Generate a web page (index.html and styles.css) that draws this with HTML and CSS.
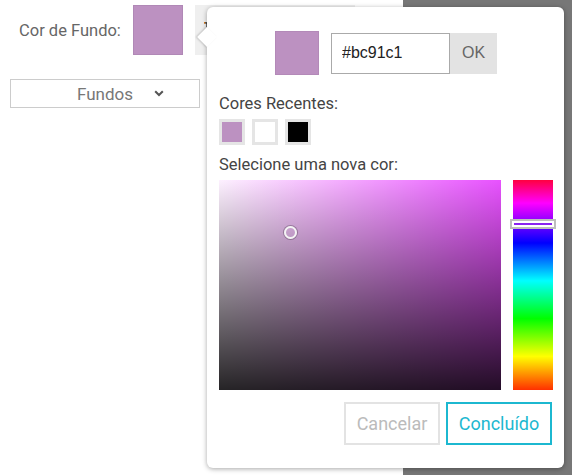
FILE: index.html
```html
<!DOCTYPE html>
<html lang="pt">
<head>
<meta charset="utf-8">
<title>Cor de Fundo</title>
<link rel="stylesheet" href="styles.css">
</head>
<body>
<div class="main">
  <div class="row">
    <span class="label">Cor de Fundo:</span>
    <span class="bg-swatch"></span>
    <div class="toolbar">
      <svg class="tb-icon" width="6" height="6" viewBox="0 0 6 6"><path d="M0.5 0.8h5M3 0.8v4.5" stroke="#222" stroke-width="1.2" fill="none"/><rect x="0" y="0" width="1.2" height="1.6" fill="#e07a10"/></svg>
    </div>
  </div>
  <div class="dropdown">
    <span></span>
    <span class="dd-text">Fundos</span>
    <svg class="chev" width="10" height="7" viewBox="0 0 10 7"><path d="M1.2 1.2L5 5l3.8-3.8" stroke="#555" stroke-width="2" fill="none"/></svg>
  </div>
</div>
<div class="side"></div>

<div class="popup">
  <div class="top-row">
    <span class="preview"></span>
    <div class="hex-group">
      <input class="hex" type="text" value="#bc91c1">
      <button class="ok">OK</button>
    </div>
  </div>
  <div class="caption recent-cap">Cores Recentes:</div>
  <div class="recent">
    <span class="rs"><span class="rs-in purple"></span></span>
    <span class="rs"><span class="rs-in white"></span></span>
    <span class="rs"><span class="rs-in black"></span></span>
  </div>
  <div class="caption select-cap">Selecione uma nova cor:</div>
  <div class="picker">
    <div class="sv">
      <div class="sv-white"></div>
      <div class="sv-black"></div>
      <span class="marker"></span>
    </div>
    <div class="hue">
      <span class="hue-handle"></span>
    </div>
  </div>
  <div class="actions">
    <button class="btn cancel">Cancelar</button>
    <button class="btn done">Concluído</button>
  </div>
</div>
</body>
</html>
```

FILE: styles.css
```css
* { box-sizing: border-box; }
html, body { margin: 0; padding: 0; }
body {
  display: flex;
  width: 572px;
  height: 475px;
  overflow: hidden;
  font-family: Roboto, "Liberation Sans", sans-serif;
  background: #fff;
}
.main {
  width: 403px;
  height: 475px;
  background: #fff;
  padding-top: 5px;
}
.side {
  flex: 1;
  background: #777777;
}
.row {
  display: flex;
  align-items: center;
  height: 50px;
  padding-left: 19px;
}
.label {
  width: 114px;
  font-size: 16.5px;
  color: #666;
}
.bg-swatch {
  width: 50px;
  height: 50px;
  background: #bc91c1;
  border: 1px solid #b088b6;
}
.toolbar {
  margin-left: 12px;
  width: 160px;
  height: 50px;
  background: #efefef;
  display: flex;
  align-items: center;
  padding-left: 9px;
}
.tb-icon { margin-top: -10px; }
.dropdown {
  margin: 24px 0 0 10px;
  width: 190px;
  height: 29px;
  border: 1px solid #cccccc;
  display: grid;
  grid-template-columns: 1fr auto 1fr;
  align-items: center;
}
.dd-text {
  font-size: 17px;
  color: #777;
}
.chev { margin-left: 21px; }

.popup {
  position: absolute;
  left: 207px;
  top: 7px;
  width: 357px;
  height: 461px;
  background: #fff;
  border-radius: 6px;
  box-shadow: 0 1px 5px rgba(0,0,0,0.35);
  padding: 24px 11px 0 12px;
}
.popup::before {
  content: "";
  position: absolute;
  left: -7px;
  top: 23px;
  width: 14px;
  height: 14px;
  background: #fff;
  transform: rotate(45deg);
  box-shadow: -1px 1px 2px rgba(0,0,0,0.18);
}
.top-row {
  position: relative;
  display: flex;
  justify-content: center;
  align-items: center;
  gap: 12px;
  height: 44px;
}
.preview {
  width: 44px;
  height: 44px;
  background: #bc91c1;
  border: 1px solid #b389b8;
}
.hex-group {
  display: flex;
  height: 41px;
}
.hex {
  width: 119px;
  height: 41px;
  border: 1px solid #aaaaaa;
  padding: 0 0 0 10px;
  margin: 0;
  font-family: "Liberation Sans", Arial, sans-serif;
  font-size: 16px;
  color: #222;
  outline: none;
}
.ok {
  width: 47px;
  height: 41px;
  border: 0;
  margin: 0;
  background: #e3e3e3;
  font-family: "Liberation Sans", Arial, sans-serif;
  font-size: 16px;
  color: #666;
}
.caption {
  font-size: 16.5px;
  line-height: 19px;
  color: #444;
}
.recent-cap { margin-top: 19px; }
.recent {
  display: flex;
  gap: 7px;
  margin-top: 6px;
}
.rs {
  width: 26px;
  height: 26px;
  border: 3px solid #e5e5e5;
  display: flex;
}
.rs-in { flex: 1; }
.rs-in.purple { background: #bc91c1; }
.rs-in.white { background: #fff; }
.rs-in.black { background: #000; }
.select-cap { margin-top: 10px; }
.picker {
  display: flex;
  gap: 12px;
  margin-top: 6px;
}
.sv {
  position: relative;
  width: 282px;
  height: 210px;
  background: #e433ff;
}
.sv-white, .sv-black {
  position: absolute;
  inset: 0;
}
.sv-white { background: linear-gradient(to right, rgba(255,255,255,0.93), rgba(255,255,255,0.15)); }
.sv-black { background: linear-gradient(to top, rgba(0,0,0,0.85), rgba(0,0,0,0)); }
.marker {
  position: absolute;
  left: 65px;
  top: 46px;
  width: 13px;
  height: 13px;
  border-radius: 50%;
  border: 2px solid #f4f4f4;
  box-shadow: 0 0 0 1px rgba(0,0,0,0.25);
}
.hue {
  position: relative;
  width: 40px;
  height: 210px;
  background: linear-gradient(to bottom, #ff0040 0%, #ff00ff 11%, #0000ff 30%, #00ffff 48%, #00ff00 66%, #ffff00 84%, #ff3000 100%);
}
.hue-handle {
  position: absolute;
  left: -3px;
  top: 39px;
  width: 46px;
  height: 10px;
  border: 2px solid #bdbdbd;
  background: #8a22f0;
  box-shadow: inset 0 0 0 2px #fff;
}
.actions {
  display: flex;
  justify-content: flex-end;
  gap: 6px;
  margin-top: 12px;
  padding-right: 1px;
}
.btn {
  height: 43px;
  background: #fff;
  font-family: Roboto, sans-serif;
  font-size: 18px;
  padding: 0;
  margin: 0;
}
.cancel {
  width: 96px;
  border: 2px solid #e3e3e3;
  color: #bbbbbb;
}
.done {
  width: 106px;
  border: 2px solid #1cb8d0;
  color: #1cb8d0;
}
```
